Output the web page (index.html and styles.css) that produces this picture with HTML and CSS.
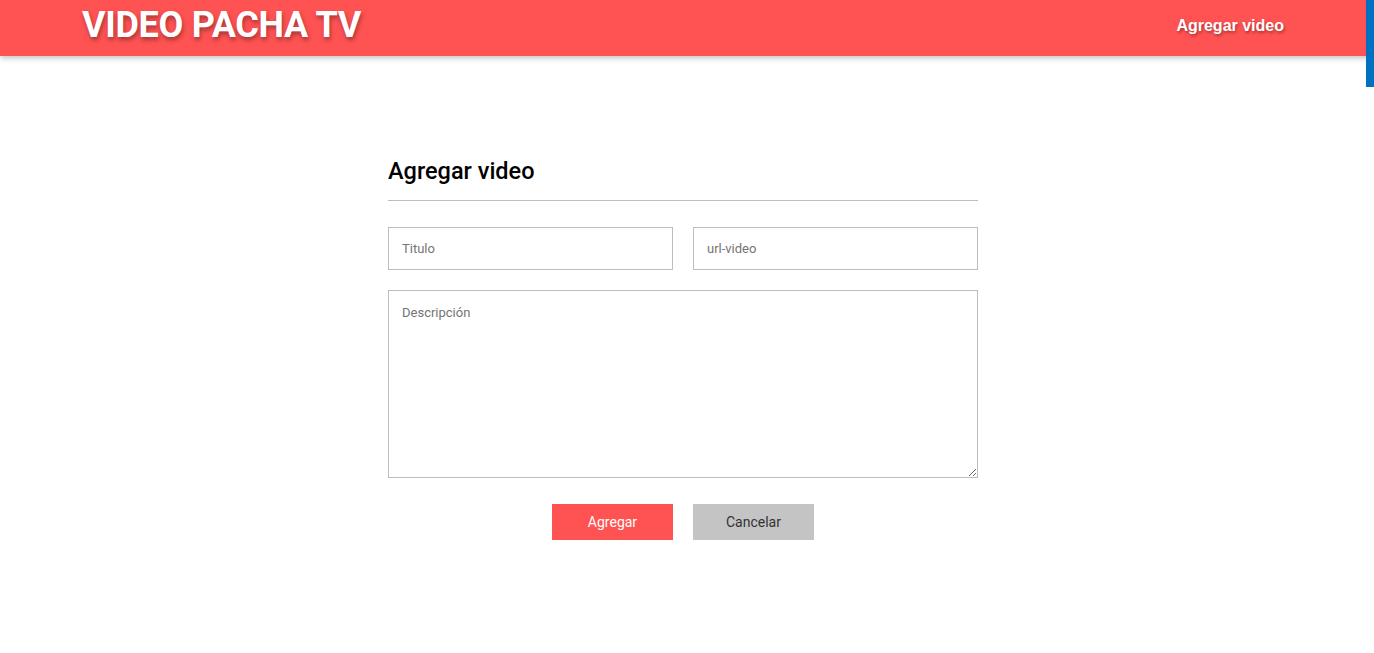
FILE: index.html
```html
<!DOCTYPE html>
<html lang="es">
<head>
<meta charset="utf-8">
<title>Video Pacha TV</title>
<link rel="stylesheet" href="styles.css">
</head>
<body>
<header class="header">
  <h1 class="logo">VIDEO PACHA TV</h1>
  <nav class="nav"><a class="nav-link" href="#">Agregar video</a></nav>
</header>
<div class="side-bar"></div>
<main class="main">
  <form class="form">
    <h2 class="form-title">Agregar video</h2>
    <hr class="divider">
    <div class="row">
      <input class="field" type="text" placeholder="Titulo">
      <input class="field" type="text" placeholder="url-video">
    </div>
    <textarea class="field area" placeholder="Descripción"></textarea>
    <div class="actions">
      <button type="button" class="btn btn-primary">Agregar</button>
      <button type="button" class="btn btn-secondary">Cancelar</button>
    </div>
  </form>
</main>
</body>
</html>
```
FILE: styles.css
```css
* { box-sizing: border-box; }
html, body { margin: 0; padding: 0; background: #fff; }
body { font-family: Roboto, "Liberation Sans", Arial, sans-serif; }

.header {
  height: 56px;
  background: #ff5252;
  display: flex;
  align-items: center;
  justify-content: space-between;
  padding: 0 90px 0 82px;
  box-shadow: 0 2px 6px rgba(0,0,0,0.25);
  position: relative;
  z-index: 1;
}
.logo {
  margin: 0;
  margin-top: -6px;
  color: #fff;
  font-family: Roboto, sans-serif;
  font-weight: 700;
  font-size: 36px;
  letter-spacing: -0.3px;
  text-shadow: 1px 3px 4px rgba(0,0,0,0.35);
}
.nav { margin-top: -6px; }
.nav-link {
  color: #fff;
  text-decoration: none;
  font-family: "Liberation Sans", Arial, sans-serif;
  font-weight: 700;
  font-size: 16px;
  text-shadow: 1px 2px 3px rgba(0,0,0,0.35);
}
.side-bar {
  position: absolute;
  top: 0;
  right: 0;
  width: 8px;
  height: 87px;
  background: #0070c0;
  z-index: 2;
}

.main {
  display: flex;
  justify-content: center;
  padding: 101px 8px 0 0;
}
.form { width: 590px; }
.form-title {
  margin: 0;
  font-family: Roboto, sans-serif;
  font-weight: 500;
  font-size: 23.5px;
  color: #000;
  line-height: 28px;
}
.divider {
  border: 0;
  border-top: 1px solid #bdbdbd;
  margin: 15px 0 26px;
}
.row {
  display: flex;
  gap: 20px;
  margin-bottom: 20px;
}
.field {
  display: block;
  height: 43px;
  flex: 1;
  border: 1px solid #bdbdbd;
  padding: 0 13px;
  font-family: Roboto, sans-serif;
  font-size: 13px;
  color: #333;
  outline: none;
  background: #fff;
}
.field::placeholder { color: #757575; }
.area {
  width: 100%;
  height: 188px;
  padding: 14px 13px;
  resize: vertical;
}
.actions {
  display: flex;
  justify-content: center;
  gap: 20px;
  margin-top: 26px;
}
.btn {
  width: 121px;
  height: 36px;
  border: 0;
  font-family: Roboto, sans-serif;
  font-size: 14px;
  cursor: pointer;
}
.btn-primary { background: #ff5252; color: #fff; }
.btn-secondary { background: #c4c4c4; color: #333; }
```
